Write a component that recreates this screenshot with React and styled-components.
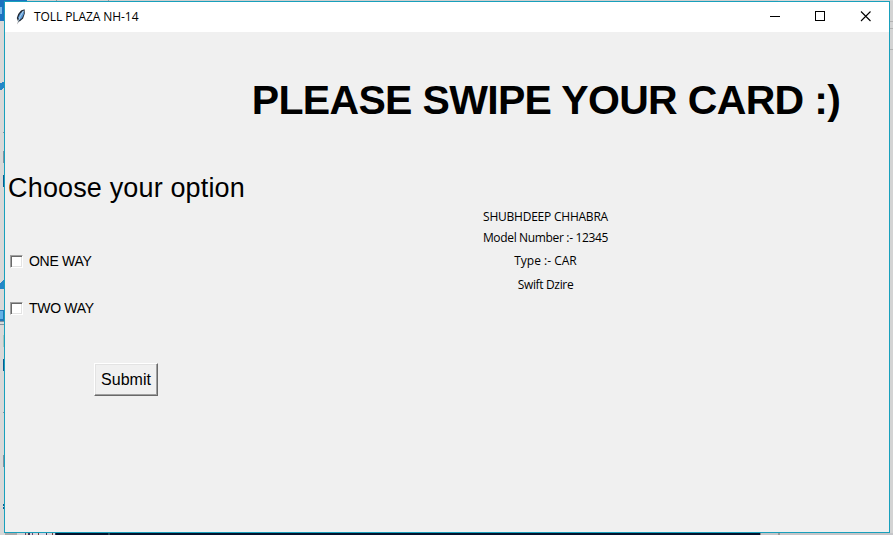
import React from "react";
import styled, { createGlobalStyle } from "styled-components";

const GlobalStyle = createGlobalStyle`
  * { box-sizing: border-box; }
  body { margin: 0; overflow: hidden; background: #d9d9d9; color: #000; }
`;

const Desktop = styled.main`
  display: grid;
  grid-template: 1px 532px 2px / 4px 886px 3px;
  width: 893px;
  height: 535px;
  background: #dcdcdc;
`;

const TopEdge = styled.div`
  grid-column: 1 / -1;
  background: linear-gradient(90deg, #1b72c0 27px, #cfcfcf 27px 56px, #999 56px 57px, #cfcfcf 57px 108px, #999 108px 109px, #cfcfcf 109px 778px, #d8d8d8 778px);
`;

const Side = styled.svg`
  display: block;
  width: 100%;
  height: 100%;
`;

const BottomEdge = styled.div`
  grid-column: 1 / -1;
  background: linear-gradient(90deg, #d8d8d8 5px, #aaa 5px 17px, #d4d2d4 17px 24px, transparent 24px 56px, #04122c 56px 108px, #294451 108px 110px, #04122c 110px 760px, #888 760px 761px, #c5c6c9 761px 778px, #999 778px 780px, #c5c5c8 780px),
    linear-gradient(90deg, #d9d4dc 25px, #5d4770 25px 26px, #dcc9b8 26px 28px, #3f3553 28px 30px, #d5d2dc 30px 32px, #5d4770 32px 33px, #d9d4dc 33px 38px, #703f35 38px 39px, #d4d8e5 39px 46px, #3f3553 46px 47px, #d9d4dc 47px 52px, #703f35 52px 53px, #d4d8e5 53px 55px, #3f3553 55px);
`;

const Window = styled.section`
  display: flex;
  flex-direction: column;
  border: 1px solid #18a0bc;
  background: #f0f0f0;
`;

const TitleBar = styled.header`
  display: flex;
  align-items: center;
  height: 30px;
  padding: 0 1px 0 9px;
  background: #fff;
`;

const Title = styled.span`
  flex: 1;
  margin-left: 5px;
  font: 12px/16px "Open Sans", sans-serif;
  letter-spacing: ${(p) => p.$spacing};
  white-space: nowrap;
`;

const Feather = styled.svg`
  width: 15px;
  height: 18px;
`;

const WindowButton = styled.button`
  display: grid;
  place-items: center;
  width: 45.5px;
  height: 30px;
  padding: 0 0 1px;
  border: 0;
  background: transparent;
  svg { display: block; width: 11px; height: 11px; }
`;

const Client = styled.div`
  display: grid;
  grid-template-columns: 242px 598px;
  grid-template-rows: 136px 39px 20px 22px 24px 24px 22px 121px;
  justify-items: center;
  align-items: center;
`;

const Heading = styled.h1`
  grid-area: 1 / 2;
  margin: 0;
  font: bold 41px/48px "Liberation Sans", Arial, sans-serif;
  letter-spacing: ${(p) => p.$spacing};
  white-space: nowrap;
`;

const Prompt = styled.h2`
  grid-area: 2 / 1;
  margin: 0;
  padding-left: 1px;
  font: normal 27px/32px "Liberation Sans", Arial, sans-serif;
  letter-spacing: ${(p) => p.$spacing};
  white-space: nowrap;
`;

const Detail = styled.div`
  grid-area: ${(p) => p.$row} / 2;
  padding-right: 1px;
  font: 12px/16px "Open Sans", sans-serif;
  letter-spacing: ${(p) => p.$spacing};
  white-space: nowrap;
`;

const Option = styled.label`
  grid-area: ${(p) => p.$row} / 1;
  justify-self: start;
  display: flex;
  align-items: center;
  gap: 6px;
  padding-left: 5px;
  font: 14px/16px "Liberation Sans", Arial, sans-serif;
  letter-spacing: ${(p) => p.$spacing};
  white-space: nowrap;
`;

const Checkbox = styled.input`
  appearance: none;
  width: 13px;
  height: 13px;
  margin: 0;
  border: 1px solid;
  border-color: #a0a0a0 #fff #fff #a0a0a0;
  background: #fff;
  box-shadow: inset 1px 1px #696969, inset -1px -1px #e3e3e3;
`;

const Submit = styled.button`
  grid-area: 8 / 1;
  width: 64px;
  height: 33px;
  padding: 0;
  border: 1px solid;
  border-color: #fff #696969 #696969 #fff;
  box-shadow: inset -1px -1px #a0a0a0, inset 1px 1px #e3e3e3;
  background: #f0f0f0;
  color: #000;
  font: 16px/20px "Liberation Sans", Arial, sans-serif;
`;

export default function App() {
  return (
    <>
      <GlobalStyle />
      <Desktop>
        <TopEdge />
        <Side viewBox="0 0 4 532" preserveAspectRatio="none" shapeRendering="crispEdges" aria-hidden="true">
          <path fill="#d9d9d9" d="M0 0h4v532H0z" />
          <path fill="#1b72c0" d="M0 0h4v20H0z" />
          <path fill="#77b8ea" d="M0 6h2v7H0z" />
          <path fill="#2487c8" d="M0 82l4-1v5l-2 3H0zM0 282l4-4v10H0z" />
          <path fill="#2377b7" d="M0 309h4v11H0z" />
          <path fill="#62b2e7" d="M0 310h3v8H0z" />
          <path fill="#8191a0" d="M0 320h4v1H0zm0 3h4v1H0zM3 131h1v1H3zM3 150h1v12H3zM3 411h1v1H3zM3 454h1v12H3z" />
          <path fill="#075b91" d="M3 174h1v12H3zM3 358h1v12H3zM3 503h1v2H3zM3 506h1v2H3z" />
          <path fill="#a7c3bd" d="M3 334h1v12H3z" />
        </Side>
        <Window>
          <TitleBar>
            <Feather viewBox="0 0 15 18" aria-hidden="true">
              <path d="M3.5 16.5L4 13.2 2.8 10 4.2 6 7 2.5l3.6-1.3.2 4.3-1.7 5-3.1 2.8-1.4.1z" fill="#202833" />
              <path d="M4.2 9.4l1.8-3.6 3.8-3.5.1 3.7L8 10l-2.6 2.2z" fill="#5b98d5" />
              <path d="M9.3 3L6.2 8.5l-2 5" fill="none" stroke="#c9e5f7" strokeWidth=".8" />
            </Feather>
            <Title $spacing="-0.08px">TOLL PLAZA NH-14</Title>
            <WindowButton aria-label="Minimize">
              <svg viewBox="0 0 11 11" shapeRendering="crispEdges"><path d="M1 5h10v1H1z" /></svg>
            </WindowButton>
            <WindowButton aria-label="Maximize">
              <svg viewBox="0 0 11 11" shapeRendering="crispEdges"><path d="M1.5.5h9v9h-9z" fill="none" stroke="#000" /></svg>
            </WindowButton>
            <WindowButton aria-label="Close">
              <svg viewBox="0 0 11 11"><path d="M1 .5l9.5 9.5M10.5.5L1 10" stroke="#000" strokeWidth="1.1" /></svg>
            </WindowButton>
          </TitleBar>
          <Client>
            <Heading $spacing="-0.67px">PLEASE SWIPE YOUR CARD :)</Heading>
            <Prompt $spacing="0.15px">Choose your option</Prompt>
            <Detail $row={3} $spacing="-0.23px">SHUBHDEEP CHHABRA</Detail>
            <Detail $row={4} $spacing="-0.34px">Model Number :- 12345</Detail>
            <Detail $row={5} $spacing="0">Type :- CAR</Detail>
            <Detail $row={6} $spacing="-0.34px">Swift Dzire</Detail>
            <Option $row={5} $spacing="-0.3px"><Checkbox type="checkbox" />ONE WAY</Option>
            <Option $row={7} $spacing="-0.3px"><Checkbox type="checkbox" />TWO WAY</Option>
            <Submit type="button">Submit</Submit>
          </Client>
        </Window>
        <Side viewBox="0 0 3 532" preserveAspectRatio="none" shapeRendering="crispEdges" aria-hidden="true">
          <path fill="#d3d3d3" d="M0 0h3v532H0z" />
          <path fill="#b1b1b1" d="M0 20h3v1H0zm0 7h3v1H0zm0 21h3v1H0z" />
        </Side>
        <BottomEdge />
      </Desktop>
    </>
  );
}
